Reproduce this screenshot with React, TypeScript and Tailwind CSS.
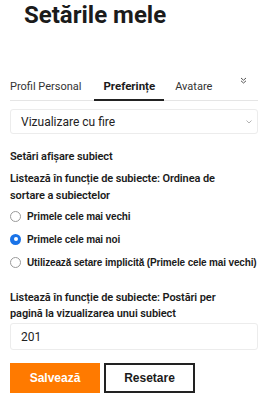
import React from "react";

export default function App() {
  const arial = { fontFamily: '"Liberation Sans", Arial, sans-serif' };
  return (
    <div className="w-[268px] h-[400px] bg-white text-[#1b1b1b] overflow-hidden" style={{ fontFamily: 'Roboto, "Noto Sans", sans-serif' }}>
      <h1 className="pl-[24px] text-[24px] leading-[30px] font-bold">Setările mele</h1>
      <div className="mt-[46px] mx-[10px] border-b border-[#e5e5e5] flex items-end h-[25px] relative">
        <div className="text-[11px] text-[#333] pb-[5px] pr-[13px]">Profil Personal</div>
        <div className="text-[11.5px] font-bold px-[9px] pb-[4px] border-b-2 border-[#222] -mb-px">Preferințe</div>
        <div className="text-[11px] text-[#333] pl-[11px] pb-[5px]">Avatare</div>
        <svg className="absolute left-[230px] top-[1px]" width="7" height="7" viewBox="0 0 7 7" fill="none" stroke="#555" strokeWidth="1">
          <path d="M1 1 L3.5 3.2 L6 1" />
          <path d="M1 3.8 L3.5 6 L6 3.8" />
        </svg>
      </div>
      <div className="mx-[10px] mt-[8px] h-[25px] border border-[#ececec] rounded-[3px] flex items-center justify-between pl-[10px] pr-[5px]">
        <span className="text-[12px] text-[#222]">Vizualizare cu fire</span>
        <svg width="6" height="4" viewBox="0 0 6 4" fill="none" stroke="#aaa" strokeWidth="0.9">
          <path d="M0.5 0.5 L3 3 L5.5 0.5" />
        </svg>
      </div>
      <div className="px-[10px] mt-[15px]">
        <div className="text-[11px] font-semibold leading-[16px] tracking-[-0.1px]">Setări afișare subiect</div>
        <div className="mt-[5px] w-[225px] text-[11px] font-semibold leading-[17px] tracking-[-0.1px]">Listează în funcție de subiecte: Ordinea de sortare a subiectelor</div>
        <div className="mt-[5px] flex flex-col gap-[9px]" style={arial}>
          {[
            ["Primele cele mai vechi", false],
            ["Primele cele mai noi", true],
            ["Utilizează setare implicită (Primele cele mai vechi)", false],
          ].map(([label, checked]) => (
            <label key={label as string} className="flex items-center gap-[6px] h-[14px]">
              {checked ? (
                <span className="w-[11px] h-[11px] rounded-full bg-[#1a73e8] flex items-center justify-center shrink-0">
                  <span className="w-[4px] h-[4px] rounded-full bg-white" />
                </span>
              ) : (
                <span className="w-[11px] h-[11px] rounded-full border border-[#9a9a9a] bg-white shrink-0" />
              )}
              <span className="text-[10px] font-bold tracking-[-0.15px] text-[#1b1b1b] whitespace-nowrap">{label as string}</span>
            </label>
          ))}
        </div>
        <div className="mt-[21px] w-[225px] text-[11px] font-semibold leading-[16px] tracking-[-0.1px]">Listează în funcție de subiecte: Postări per pagină la vizualizarea unui subiect</div>
        <div className="mt-[1px] h-[27px] border border-[#ececec] rounded-[3px] flex items-center pl-[10px]">
          <span className="text-[12px] text-[#222]">201</span>
        </div>
        <div className="mt-[13px] flex gap-[4px]" style={arial}>
          <button className="w-[90px] h-[30px] bg-[#ff7a00] text-white text-[12px] font-bold">Salvează</button>
          <button className="w-[91px] h-[30px] border-2 border-[#222] bg-white text-[#1b1b1b] text-[12px] font-bold">Resetare</button>
        </div>
      </div>
    </div>
  );
}
